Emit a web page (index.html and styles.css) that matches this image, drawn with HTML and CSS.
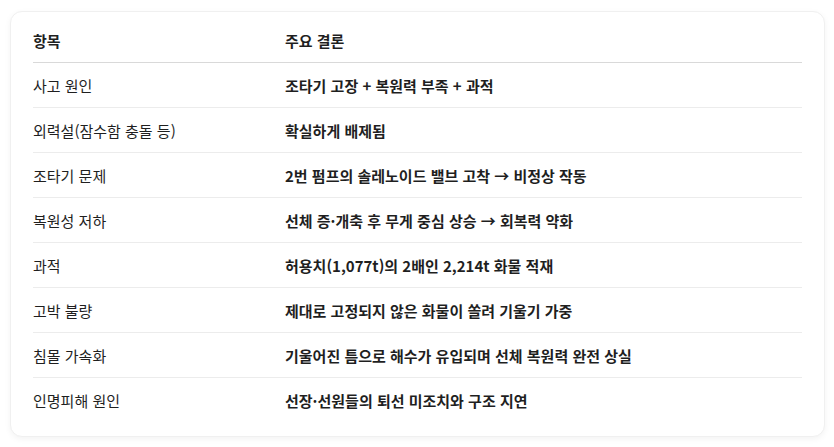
FILE: index.html
```html
<!DOCTYPE html>
<html lang="ko">
<head>
<meta charset="utf-8">
<link rel="stylesheet" href="styles.css">
</head>
<body>
<div class="card">
  <table class="summary">
    <thead>
      <tr><th class="col-item">항목</th><th>주요 결론</th></tr>
    </thead>
    <tbody>
      <tr><td>사고 원인</td><td class="strong">조타기 고장 + 복원력 부족 + 과적</td></tr>
      <tr><td>외력설(잠수함 충돌 등)</td><td class="strong">확실하게 배제됨</td></tr>
      <tr><td>조타기 문제</td><td class="strong">2번 펌프의 솔레노이드 밸브 고착 → 비정상 작동</td></tr>
      <tr><td>복원성 저하</td><td class="strong">선체 증·개축 후 무게 중심 상승 → 회복력 약화</td></tr>
      <tr><td>과적</td><td class="strong">허용치(1,077t)의 2배인 2,214t 화물 적재</td></tr>
      <tr><td>고박 불량</td><td class="strong">제대로 고정되지 않은 화물이 쏠려 기울기 가중</td></tr>
      <tr><td>침몰 가속화</td><td class="strong">기울어진 틈으로 해수가 유입되며 선체 복원력 완전 상실</td></tr>
      <tr><td>인명피해 원인</td><td class="strong">선장·선원들의 퇴선 미조치와 구조 지연</td></tr>
    </tbody>
  </table>
</div>
</body>
</html>
```

FILE: styles.css
```css
html, body {
  margin: 0;
  padding: 0;
  background: #ffffff;
}
body {
  padding: 11px 9px 11px 10px;
  font-family: "Noto Sans CJK KR", "Noto Sans", sans-serif;
  color: #1f1f1f;
}
.card {
  background: #fff;
  border: 1px solid #f0f0f0;
  border-radius: 12px;
  box-shadow: 0 2px 6px rgba(0,0,0,0.05);
  padding: 6px 22px 14px 22px;
}
.summary {
  width: 100%;
  border-collapse: collapse;
  font-size: 15px;
}
.summary th {
  text-align: left;
  font-weight: 600;
  height: 44px;
  padding: 0;
  border-bottom: 1px solid #d9d9d9;
  vertical-align: middle;
}
.summary th.col-item {
  width: 252px;
}
.summary td {
  height: 44px;
  padding: 0;
  border-bottom: 1px solid #ececec;
  vertical-align: middle;
  font-weight: 400;
}
.summary tbody tr:last-child td {
  border-bottom: none;
}
.summary td.strong {
  font-weight: 600;
}
```
